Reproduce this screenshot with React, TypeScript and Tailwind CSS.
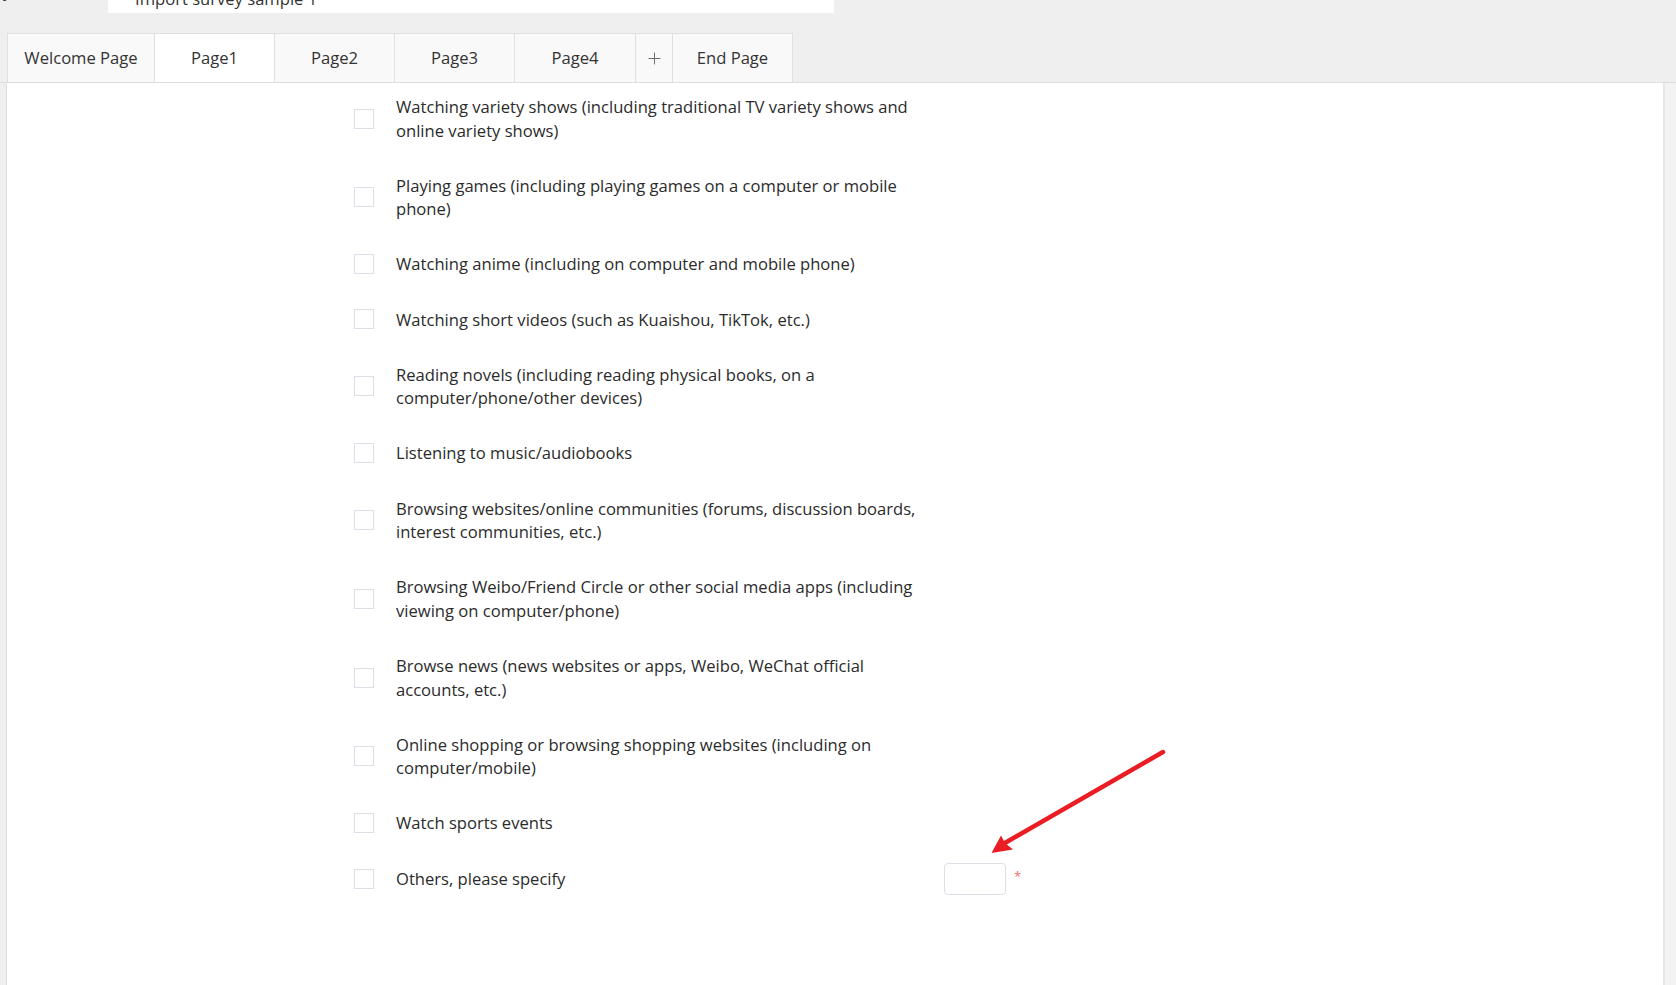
import { FC } from "react"
import { Plus } from "lucide-react"

const options = [
  "Watching variety shows (including traditional TV variety shows and online variety shows)",
  "Playing games (including playing games on a computer or mobile phone)",
  "Watching anime (including on computer and mobile phone)",
  "Watching short videos (such as Kuaishou, TikTok, etc.)",
  "Reading novels (including reading physical books, on a computer/phone/other devices)",
  "Listening to music/audiobooks",
  "Browsing websites/online communities (forums, discussion boards, interest communities, etc.)",
  "Browsing Weibo/Friend Circle or other social media apps (including viewing on computer/phone)",
  "Browse news (news websites or apps, Weibo, WeChat official accounts, etc.)",
  "Online shopping or browsing shopping websites (including on computer/mobile)",
  "Watch sports events",
]

const tabs = [
  { label: "Welcome Page", w: "w-[148px]", active: false },
  { label: "Page1", w: "w-[120px]", active: true },
  { label: "Page2", w: "w-[120px]", active: false },
  { label: "Page3", w: "w-[120px]", active: false },
  { label: "Page4", w: "w-[121px]", active: false },
]

const Checkbox: FC = () => (
  <div className="h-[20px] w-[20px] shrink-0 border border-[#dcdfe6] bg-white" />
)

const App: FC = () => {
  return (
    <div className="relative h-[985px] w-full overflow-hidden bg-[#efefef] font-['Open_Sans',sans-serif] text-[#2b2b2b]">
      {/* cut off header */}
      <div className="flex h-[13px] overflow-hidden">
        <div className="w-[108px] pl-[3px]">
          <div className="-mt-[19px] text-[16px] leading-[20px] text-[#333]">y</div>
        </div>
        <div className="w-[726px] bg-white pl-[27px]">
          <div className="-mt-[11px] text-[16.6px] leading-[20px] text-[#333]">Import survey sample 1</div>
        </div>
      </div>

      {/* page tabs */}
      <div className="ml-[7px] mt-[20px] flex h-[49px]">
        {tabs.map((t, i) => (
          <div
            key={t.label}
            className={`${t.w} flex items-center justify-center border-t border-r border-[#e0e0e0] text-[16.6px] text-[#333] ${i === 0 ? "border-l" : ""} ${t.active ? "bg-white" : "bg-[#f9f9f9]"}`}
          >
            {t.label}
          </div>
        ))}
        <div className="flex w-[37px] items-center justify-center border-t border-r border-[#e0e0e0] bg-[#f9f9f9] text-[#666]">
          <Plus size={19} strokeWidth={1.2} />
        </div>
        <div className="flex w-[120px] items-center justify-center border-t border-r border-[#e0e0e0] bg-[#f9f9f9] text-[16.6px] text-[#333]">
          End Page
        </div>
      </div>

      {/* survey body */}
      <div className="flex h-[903px] border-t border-[#dedede]">
        <div className="ml-[6px] flex-1 border-l border-[#dedede] bg-white pl-[347px] pt-[12px]">
          <div className="flex flex-col gap-[31.7px]">
            {options.map((o) => (
              <div key={o} className="flex items-center">
                <Checkbox />
                <p className="ml-[22px] w-[526px] text-[16.6px] leading-[23.5px]">{o}</p>
              </div>
            ))}
            <div className="flex items-center">
              <Checkbox />
              <p className="ml-[22px] w-[526px] text-[16.6px] leading-[23.5px]">Others, please specify</p>
              <input className="-my-[4px] ml-[22px] h-[32px] w-[62px] rounded-[4px] border border-[#dcdfe6] outline-none" />
              <span className="ml-[8px] -mt-[4px] text-[13px] text-[#f56c6c]">*</span>
            </div>
          </div>
        </div>
        <div className="w-[2px] bg-[#e6e6e6]" />
        <div className="w-[11px] bg-[#f3f3f3]" />
      </div>

      {/* annotation arrow */}
      <svg className="pointer-events-none absolute inset-0 h-full w-full">
        <line x1="1163" y1="752" x2="1004" y2="843.5" stroke="#ea1c24" strokeWidth="4.5" strokeLinecap="round" />
        <polygon points="991.5,853 1001,835.5 1005,843 1013,849.5" fill="#ea1c24" />
      </svg>
    </div>
  )
}

export default App
